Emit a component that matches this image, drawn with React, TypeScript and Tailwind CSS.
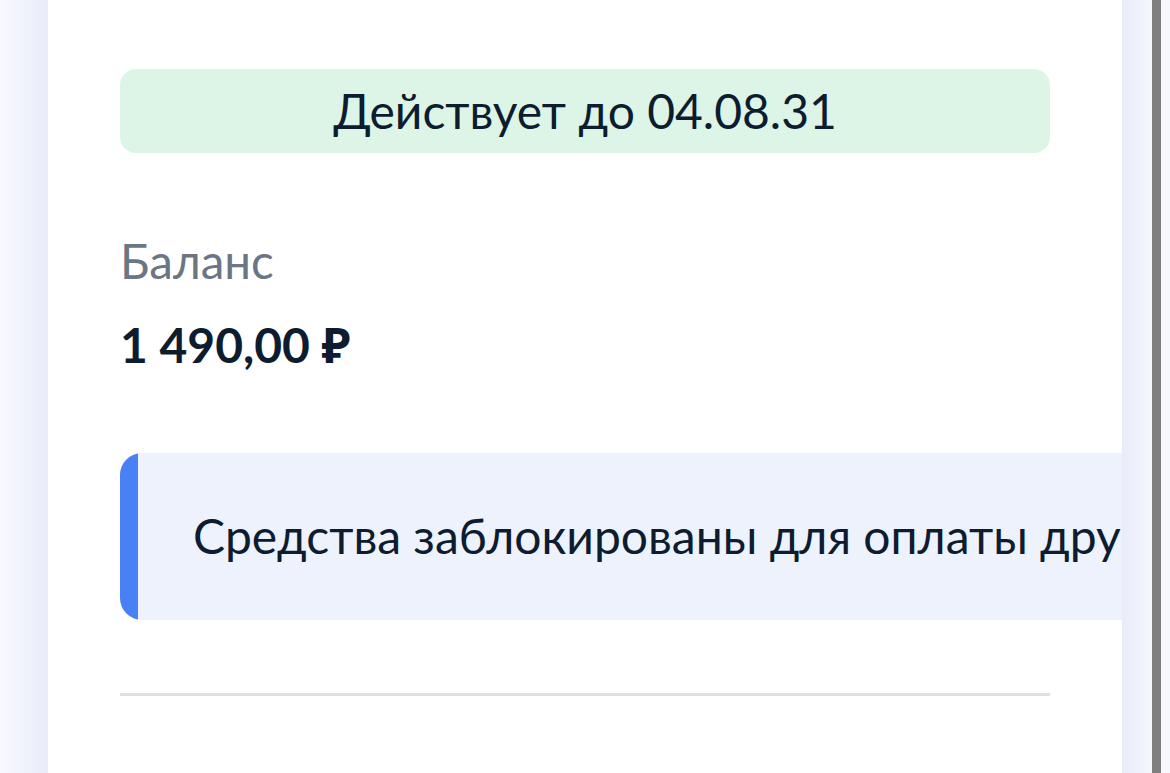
import React from "react";

const font = "font-['Lato','Noto_Sans',sans-serif]";

export default function App() {
  return (
    <div className={`flex h-[773px] w-[1170px] overflow-hidden bg-white ${font}`}>
      {/* Left page gutter */}
      <div className="w-[48px] shrink-0 bg-gradient-to-r from-[#f9fafe] to-[#e8ebf8]" />

      {/* Main card */}
      <div className="w-[1074px] shrink-0 overflow-hidden bg-white pl-[72px] pt-[69px]">
        <div className="w-[930px]">
          <div className="flex h-[84px] items-center justify-center rounded-[16px] bg-[#dcf5e7]">
            <span className="text-[48px] leading-[1.2] text-[#0e1c2f]">
              Действует до 04.08.31
            </span>
          </div>

          <p className="mt-[79px] text-[47.5px] leading-[1.2] text-[#6b7685]">
            Баланс
          </p>
          <p className="mt-[27px] text-[48px] font-bold leading-[1.2] text-[#0e1c2f]">
            1 490,00 ₽
          </p>
        </div>

        {/* Notice strip, wider than the card and clipped */}
        <div className="mt-[79px] flex h-[167px] w-[1300px] overflow-hidden rounded-l-[22px] bg-[#edf2fd]">
          <div className="w-[18px] shrink-0 bg-[#4a80f5]" />
          <div className="flex items-center whitespace-nowrap pl-[55px]">
            <span className="text-[48px] leading-[1.2] text-[#0e1c2f]">
              Средства заблокированы для оплаты других услуг
            </span>
          </div>
        </div>

        <div className="mt-[73px] h-[3px] w-[930px] bg-[#e0e0e0]" />
      </div>

      {/* Right gutter with scrollbar */}
      <div className="w-[30px] shrink-0 bg-gradient-to-r from-[#e8ecf9] to-[#f6f7fd]" />
      <div className="w-[9px] shrink-0 bg-[#7f7f7f]" />
      <div className="w-[9px] shrink-0 bg-[#f7f8fe]" />
    </div>
  );
}
